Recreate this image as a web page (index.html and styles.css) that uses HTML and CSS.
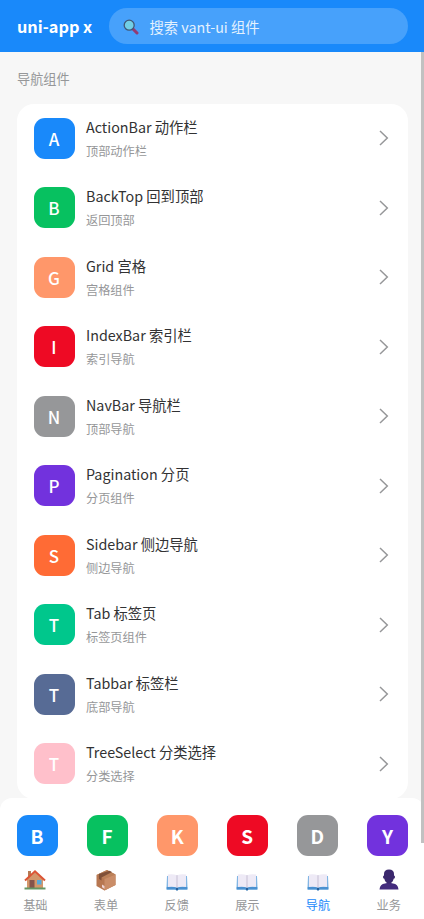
FILE: index.html
```html
<!DOCTYPE html>
<html lang="zh-CN">
<head>
<meta charset="utf-8">
<title>uni-app x</title>
<link rel="stylesheet" href="styles.css">
</head>
<body>
<svg class="defs" width="0" height="0">
  <symbol id="arrow" viewBox="0 0 10 16"><path d="M1 1 L8.3 8 L1 15" fill="none" stroke="#969799" stroke-width="1.5"/></symbol>
  <symbol id="book" viewBox="0 0 22 18">
    <path d="M1 3h20l.5 13.5H12.8L11 17.5l-1.800-1H.5z" fill="#67a9e0"/>
    <path d="M.7 14h20.600v2.500h-8.500l-1.800 1-1.800-1H.7z" fill="#4b91d1"/>
    <path d="M1.800 1.500Q7 .7 11 2.200Q15 .7 20.200 1.500V14Q15 13.200 11 14.500Q7 13.200 1.800 14z" fill="#eeeaf6"/>
    <path d="M11 2.200V14.500" stroke="#c6bfd4" stroke-width="1"/>
    <path d="M10 15h2v2l-1 .6-1-.6z" fill="#285f99"/>
  </symbol>
</svg>
<div class="app">
  <header class="header">
    <div class="brand">uni-app x</div>
    <div class="search">
      <svg class="search-icon" viewBox="0 0 16 16"><path d="M9.500 9.500L14 14" stroke="#933b73" stroke-width="3" stroke-linecap="round"/><circle cx="6.200" cy="6.200" r="5" fill="#72cfe6" stroke="#405776" stroke-width="1.300"/></svg>
      <span>搜索 vant-ui 组件</span>
    </div>
  </header>
  <main class="content">
    <h2 class="section">导航组件</h2>
    <div class="card">
      <div class="row"><div class="tile blue">A</div><div class="info"><div class="name">ActionBar 动作栏</div><div class="desc">顶部动作栏</div></div><svg class="arrow"><use href="#arrow"/></svg></div>
      <div class="row"><div class="tile green">B</div><div class="info"><div class="name">BackTop 回到顶部</div><div class="desc">返回顶部</div></div><svg class="arrow"><use href="#arrow"/></svg></div>
      <div class="row"><div class="tile peach">G</div><div class="info"><div class="name">Grid 宫格</div><div class="desc">宫格组件</div></div><svg class="arrow"><use href="#arrow"/></svg></div>
      <div class="row"><div class="tile red">I</div><div class="info"><div class="name">IndexBar 索引栏</div><div class="desc">索引导航</div></div><svg class="arrow"><use href="#arrow"/></svg></div>
      <div class="row"><div class="tile gray">N</div><div class="info"><div class="name">NavBar 导航栏</div><div class="desc">顶部导航</div></div><svg class="arrow"><use href="#arrow"/></svg></div>
      <div class="row"><div class="tile purple">P</div><div class="info"><div class="name">Pagination 分页</div><div class="desc">分页组件</div></div><svg class="arrow"><use href="#arrow"/></svg></div>
      <div class="row"><div class="tile orange">S</div><div class="info"><div class="name">Sidebar 侧边导航</div><div class="desc">侧边导航</div></div><svg class="arrow"><use href="#arrow"/></svg></div>
      <div class="row"><div class="tile mint">T</div><div class="info"><div class="name">Tab 标签页</div><div class="desc">标签页组件</div></div><svg class="arrow"><use href="#arrow"/></svg></div>
      <div class="row"><div class="tile slate">T</div><div class="info"><div class="name">Tabbar 标签栏</div><div class="desc">底部导航</div></div><svg class="arrow"><use href="#arrow"/></svg></div>
      <div class="row"><div class="tile pink">T</div><div class="info"><div class="name">TreeSelect 分类选择</div><div class="desc">分类选择</div></div><svg class="arrow"><use href="#arrow"/></svg></div>
    </div>
  </main>
  <footer class="bottom">
    <div class="shortcuts">
      <div class="tile blue">B</div><div class="tile green">F</div><div class="tile peach">K</div><div class="tile red">S</div><div class="tile gray">D</div><div class="tile purple">Y</div>
    </div>
    <nav class="tabs">
      <div class="tab">
        <svg class="emoji" viewBox="0 0 22 22"><path d="M4 2h3v7H4z" fill="#b77952"/><path d="M3 10L11 3l8 7v9H3z" fill="#d4976b"/><path d="M5.500 11h5v8h-5z" fill="#85534b"/><path d="M13 11h4.500v4.500H13z" fill="#56a8da"/><path d="M1 11.500L11 2.300l10 9.200" fill="none" stroke="#dc5435" stroke-width="2"/><path d="M.5 18.500h21v2H.5z" fill="#659664"/></svg>
        <span>基础</span></div>
      <div class="tab">
        <svg class="emoji" viewBox="0 0 22 22"><path d="M1.500 6L12 1l8.500 4.500v10.500L9.500 21.500 1.500 17z" fill="#b77751"/><path d="M1.500 6L12 1l8.500 4.500L9.500 10z" fill="#bb8058"/><path d="M9.500 10l11-4.500V16l-11 5.500z" fill="#ca8d68"/><path d="M3.800 5L14.500 1.800l2.500 1.300L6.500 8.500v3L4 10z" fill="#805038"/><path d="M7 15.500l2.500 1.500v3L7 18.300z" fill="#eed4d4"/></svg>
        <span>表单</span></div>
      <div class="tab"><svg class="emoji book"><use href="#book"/></svg><span>反馈</span></div>
      <div class="tab"><svg class="emoji book"><use href="#book"/></svg><span>展示</span></div>
      <div class="tab active"><svg class="emoji book"><use href="#book"/></svg><span>导航</span></div>
      <div class="tab">
        <svg class="emoji" viewBox="0 0 22 22"><path d="M1.500 20.500Q2 15 7 14.500L9 14v-2h4v2l2 .5Q20 15 20.500 20.500z" fill="#432b7d"/><path d="M6 5Q6 .5 11 .5T16 5v1.500q1 0 1 1.500t-1.300 1.800Q14.500 14.500 11 14.500T6.300 9.800Q5 9.500 5 8t1-1.500z" fill="#3b286d"/></svg>
        <span>业务</span></div>
    </nav>
  </footer>
  <div class="scrollbar"></div>
</div>
</body>
</html>
```

FILE: styles.css
```css
* { box-sizing: border-box; }
body {
  margin: 0;
  font-family: "Noto Sans CJK SC", sans-serif;
  background: #f7f7f7;
}
.defs { position: absolute; }
.app {
  position: relative;
  width: 424px;
  height: 919px;
  overflow: hidden;
  display: flex;
  flex-direction: column;
}
.header {
  height: 52px;
  flex: none;
  background: #1989fa;
  display: flex;
  align-items: center;
  padding: 0 16px 0 17px;
}
.brand {
  width: 92px;
  font-size: 16.300px;
  font-weight: 700;
  color: #fff;
  white-space: nowrap;
}
.search {
  flex: 1;
  height: 36px;
  border-radius: 18px;
  background: #47a1fb;
  display: flex;
  align-items: center;
  padding-left: 14px;
  gap: 10.500px;
  font-size: 14.300px;
  color: #e4f1fe;
}
.search-icon { width: 16px; height: 16px; margin-top: 1px; }
.content {
  height: 746px;
  flex: none;
  padding: 0 16px 0 17px;
}
.section {
  margin: 0;
  height: 52px;
  line-height: 53px;
  font-size: 13.2px;
  font-weight: 400;
  color: #969799;
}
.card {
  background: #fff;
  border-radius: 17px;
}
.row {
  height: 69.5px;
  display: flex;
  align-items: center;
  padding: 0 19.500px 1px 16.5px;
}
.tile {
  width: 41px;
  height: 41px;
  border-radius: 11px;
  flex: none;
  display: flex;
  align-items: center;
  justify-content: center;
  color: #fff;
  font-size: 17px;
  font-weight: 500;
}
.blue { background: #1989fa; }
.green { background: #07c160; }
.peach { background: #ff976a; }
.red { background: #ee0a24; }
.gray { background: #969799; }
.purple { background: #7232dd; }
.orange { background: #ff6b35; }
.mint { background: #00c78c; }
.slate { background: #576b95; }
.pink { background: #ffc0cb; }
.info { flex: 1; padding-left: 11.500px; }
.name {
  font-size: 14.3px;
  line-height: 22px;
  color: #323233;
}
.desc {
  margin-top: 3px;
  font-size: 12.2px;
  line-height: 20px;
  color: #969799;
}
.arrow { width: 10px; height: 16px; }
.bottom {
  height: 121px;
  flex: none;
  background: #fff;
  border-radius: 12px 12px 0 0;
}
.shortcuts {
  display: flex;
  justify-content: space-between;
  padding: 16.500px 16px 0 16.500px;
}
.shortcuts .tile {
  font-size: 19px;
  font-weight: 700;
}
.tabs { display: flex; padding-top: 13px; }
.tab {
  flex: 1;
  display: flex;
  flex-direction: column;
  align-items: center;
  font-size: 12.2px;
  line-height: 18px;
  color: #969799;
}
.tab.active { color: #1989fa; }
.emoji { width: 22px; height: 22px; margin-bottom: 5px; }
.book { height: 18px; margin-top: 4px; }
.scrollbar {
  position: absolute;
  right: 0;
  top: 52px;
  width: 3.500px;
  height: 791px;
  background: #c1c1c1;
}
```
